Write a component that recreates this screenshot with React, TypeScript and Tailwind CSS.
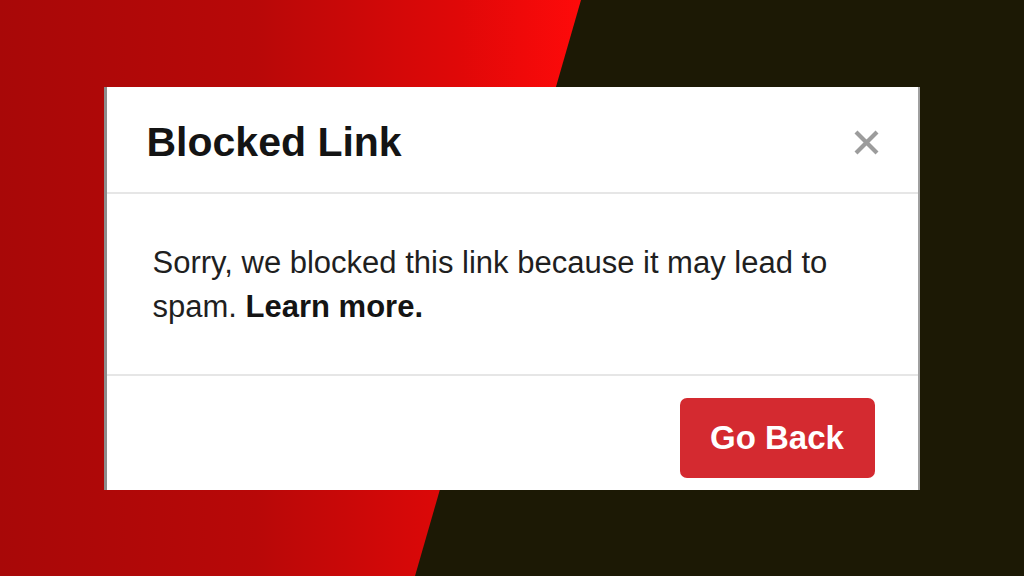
export default function App() {
  return (
    <div className="relative flex h-[576px] w-[1024px] items-center justify-center overflow-hidden bg-[#1c1905] font-['Liberation_Sans',Arial,sans-serif]">
      {/* red diagonal backdrop */}
      <div className="pointer-events-none absolute inset-0 bg-[linear-gradient(90deg,#a80808_0%,#b80808_25%,#e00808_45%,#ff0a0a_57%)] [clip-path:polygon(0_0,581px_0,415px_576px,0_576px)]" />

      <div className="relative z-10 ml-[-1px] flex h-[403px] w-[816px] flex-col border-l-[3px] border-r-[2px] border-l-[#8c8c8c] border-r-[#a0a0a0] bg-white">
        <div className="flex h-[107px] shrink-0 items-center justify-between border-b-2 border-[#e6e6e6] pl-[40px] pr-[37px] pt-[6px]">
          <h1 className="text-[41px] font-bold leading-[46px] text-[#141414]">
            Blocked Link
          </h1>
          <button className="flex h-[28px] w-[28px] items-center justify-center">
            <svg width="27" height="27" viewBox="0 0 27 27" fill="none">
              <path d="M3 3 L24 24 M24 3 L3 24" stroke="#9c9c9c" strokeWidth="4.2" strokeLinecap="butt" />
            </svg>
          </button>
        </div>

        <div className="h-[182px] shrink-0 border-b-2 border-[#e6e6e6] pl-[46px] pt-[47px]">
          <p className="max-w-[720px] text-[31px] leading-[44px] text-[#1f1f1f]">
            Sorry, we blocked this link because it may lead to spam.{" "}
            <span className="font-bold text-[#141414]">Learn more.</span>
          </p>
        </div>

        <div className="flex flex-1 items-start justify-end pr-[43px] pt-[22px]">
          <button className="flex h-[80px] w-[195px] items-center justify-center rounded-[7px] bg-[#d42a30] text-[33px] font-bold text-white">
            Go Back
          </button>
        </div>
      </div>
    </div>
  );
}
